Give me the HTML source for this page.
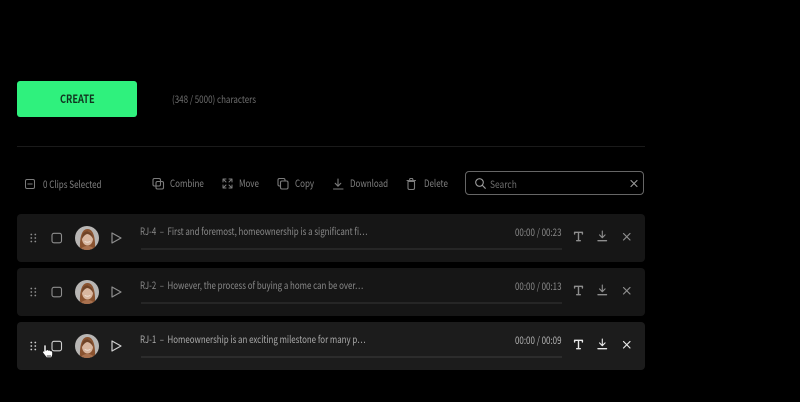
<!DOCTYPE html>
<html><head><meta charset="utf-8">
<style>
html,body{margin:0;padding:0;background:#000;}
body{width:800px;height:402px;overflow:hidden;position:relative;font-family:"Noto Sans CJK SC","Liberation Sans",sans-serif;}
.a{position:absolute;white-space:nowrap;}
.s{transform:scaleX(.8);transform-origin:0 50%;}
.t{font-size:10px;line-height:12px;color:#808080;}
.row{position:absolute;left:17px;width:628px;height:48px;background:#161616;border-radius:4px;}
.row svg{position:absolute;left:0;top:0;}
.txt{position:absolute;left:123px;top:9.500px;font-size:10px;line-height:14px;white-space:nowrap;transform:scaleX(.79);transform-origin:0 50%;}
.bar{position:absolute;left:123.500px;top:34px;width:421px;height:1.500px;background:#262626;}
.time{position:absolute;left:497.500px;top:10.500px;font-size:10px;line-height:14px;white-space:nowrap;transform:scaleX(.797);transform-origin:0 50%;}
</style></head><body>
<svg width="0" height="0" style="position:absolute">
<defs>
<clipPath id="cp"><circle cx="70" cy="24" r="12"/></clipPath>
<g id="ic" fill="none" stroke-linecap="round" stroke-linejoin="round">
<g fill="currentColor" stroke="none">
<circle cx="14.300" cy="20.500" r=".9"/><circle cx="18.300" cy="20.500" r=".9"/>
<circle cx="14.300" cy="24" r=".9"/><circle cx="18.300" cy="24" r=".9"/>
<circle cx="14.300" cy="27.500" r=".9"/><circle cx="18.300" cy="27.500" r=".9"/>
</g>
<rect x="35" y="19.300" width="9.500" height="9.500" rx="2" stroke="currentColor" stroke-width="1.100"/>
<g clip-path="url(#cp)">
<rect x="58" y="12" width="24" height="24" fill="#b8b6b4"/>
<path d="M63 37C62.500 27 63.500 15 70.500 15C77.500 15 78.500 27 78 37Z" fill="#8a5330"/>
<path d="M62 38C64 33 68 32 70.500 32C73 32 77 33 79 38Z" fill="#a9714e"/>
<ellipse cx="70.500" cy="24.500" rx="5.500" ry="7" fill="#d9b7a0"/>
<path d="M65 25C64.500 19 68 17 71 17.500C74 18 76.500 21 76 25C75 22 72 20 70 20C67.500 21 66 23 65 25Z" fill="#6f4327"/>
<path d="M68 27.500Q70.500 29 73 27.500" stroke="#eee0d5" stroke-width="1"/>
</g>
<path d="M95 19L104 24L95 29Z" stroke="currentColor" stroke-width="1.200"/>
</g>
<g id="ir" fill="none" stroke="currentColor" stroke-linecap="round" stroke-linejoin="round">
<path d="M557.600 20V18.300H565.400V20M561.500 18.300V26.500M559.700 26.700H563.300" stroke-width="1.400"/>
<path d="M585.300 17V23.500M582.500 20.900L585.300 23.700L588.100 20.900" stroke-width="1.100"/>
<path d="M581 26.700H589.500" stroke-width="1.300"/>
<path d="M606.500 19.500L613 26M613 19.500L606.500 26" stroke-width="1.200"/>
</g>
</defs>
</svg>

<div class="a" style="left:17px;top:81px;width:120px;height:36px;background:#2ff17d;border-radius:3px;"></div>
<div class="a" style="left:59.500px;top:81px;font-size:11px;line-height:36px;font-weight:700;color:#11321f;transform:scaleX(.84);transform-origin:0 50%;">CREATE</div>
<div class="a t s" style="left:172px;top:93px;color:#6e6e6e;">(348 / 5000) characters</div>
<div class="a" style="left:17px;top:146px;width:628px;height:1px;background:#1a1a1a;"></div>

<svg class="a" style="left:0;top:170px;" width="470" height="30" viewBox="0 0 470 30" fill="none" stroke="#7c7c7c" stroke-linecap="round" stroke-linejoin="round">
<rect x="25.500" y="9.500" width="9" height="9" rx="1.500" stroke-width="1"/><path d="M27.800 14H32.200" stroke-width="1"/>
<rect x="153" y="8.500" width="7.500" height="7.500" rx="1.500" stroke-width="1.100"/><rect x="156" y="11.500" width="7.500" height="7.500" rx="1.500" stroke-width="1.100"/>
<g stroke-width="1"><path d="M223 9H226M223 9V12M223 9L226 12M232 9H229M232 9V12M232 9L229 12M223 18H226M223 18V15M223 18L226 15M232 18H229M232 18V15M232 18L229 15"/></g>
<rect x="278" y="8.500" width="7" height="7.500" rx="1.500" stroke-width="1.100"/><rect x="280.500" y="11" width="7.500" height="8" rx="1.500" fill="#000" stroke-width="1.100"/>
<path d="M338 9V16M335.200 13.300L338 16.200L340.800 13.300" stroke-width="1.100"/><path d="M333.500 19H343" stroke-width="1.100"/>
<path d="M408 11.500H414.500V18C414.500 19 414 19.500 413 19.500H409.500C408.500 19.500 408 19 408 18ZM407 10.500H415.500M409.500 10L410 8.500H412.500L413 10" stroke-width="1.100"/>
</svg>

<div class="a t s" style="left:43px;top:177.500px;">0 Clips Selected</div>
<div class="a t s" style="left:170px;top:177px;">Combine</div>
<div class="a t s" style="left:239px;top:177px;">Move</div>
<div class="a t s" style="left:295px;top:177px;">Copy</div>
<div class="a t s" style="left:350px;top:177px;">Download</div>
<div class="a t s" style="left:424px;top:177px;">Delete</div>

<div class="a" style="left:465px;top:171px;width:177px;height:22px;border:1.500px solid #666;border-radius:4px;"></div>
<svg class="a" style="left:470px;top:174px;" width="170" height="20" viewBox="0 0 170 20" fill="none" stroke="#9a9a9a" stroke-linecap="round">
<circle cx="9.500" cy="8.500" r="3.800" stroke-width="1.100"/><path d="M12.400 11.400L15.300 14.300" stroke-width="1.100"/>
<path d="M161 6.500L167 12.500M167 6.500L161 12.500" stroke-width="1.100"/>
</svg>
<div class="a t" style="left:490px;top:177.500px;color:#6e6e6e;transform:scaleX(.84);transform-origin:0 50%;">Search</div>

<div class="row" style="top:214px;color:#8e8e8e;">
<svg width="628" height="48" viewBox="0 0 628 48"><use href="#ic"/><g style="color:#8e8e8e"><use href="#ir"/></g></svg>
<div class="txt" style="color:#8a8a8a;">RJ-4 &nbsp;–&nbsp; First and foremost, homeownership is a significant fi…</div><div class="bar"></div>
<div class="time" style="color:#8a8a8a;">00:00 / 00:23</div>
</div>
<div class="row" style="top:268px;color:#8e8e8e;">
<svg width="628" height="48" viewBox="0 0 628 48"><use href="#ic"/><g style="color:#8e8e8e"><use href="#ir"/></g></svg>
<div class="txt" style="color:#8a8a8a;">RJ-2 &nbsp;–&nbsp; However, the process of buying a home can be over…</div><div class="bar"></div>
<div class="time" style="color:#8a8a8a;">00:00 / 00:13</div>
</div>
<div class="row" style="top:322px;background:#1c1c1c;color:#d0d0d0;">
<svg width="628" height="48" viewBox="0 0 628 48"><use href="#ic"/><g style="color:#e8e8e8"><use href="#ir"/></g></svg>
<div class="txt" style="color:#ababab;">RJ-1 &nbsp;–&nbsp; Homeownership is an exciting milestone for many p…</div><div class="bar" style="background:#2c2c2c;"></div>
<div class="time" style="color:#b4b4b4;">00:00 / 00:09</div>
</div>

<svg class="a" style="left:39px;top:340px;" width="18" height="20" viewBox="0 0 18 20">
<path d="M5 6C5 4.500 7 4.500 7 6V10.500L7.800 10C8.300 9.500 9.500 9.800 9.700 10.500C10.300 10 11.500 10.300 11.700 11C12.500 10.700 13.500 11.200 13.500 12.200V14.500C13.500 16 12.800 17 12.300 17.500H7.500L3.700 12.500C3.200 11.500 4.200 10.500 5 11.500Z" fill="#fff" stroke="#111" stroke-width=".6" stroke-linejoin="round"/>
<rect x="7.800" y="15" width="4.300" height="2.500" fill="#999"/>
</svg>
</body></html>
